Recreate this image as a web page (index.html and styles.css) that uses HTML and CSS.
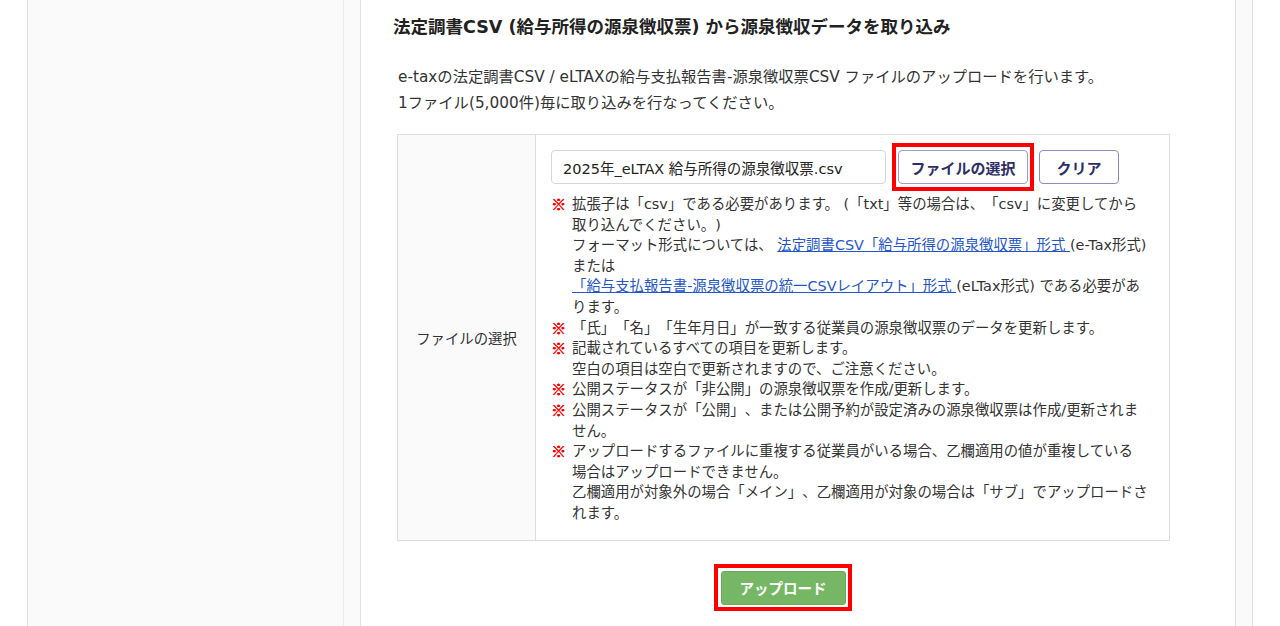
FILE: index.html
```html
<!DOCTYPE html>
<html lang="ja">
<head>
    <meta charset="UTF-8">
    <title>源泉徴収データ取り込み</title>
    <link rel="stylesheet" href="styles.css">
</head>
<body>

<div class="page">
    <div class="side"></div>

    <div class="main">
        <h2 class="title">法定調書CSV (給与所得の源泉徴収票) から源泉徴収データを取り込み</h2>

        <div class="lead">
            <p>e-taxの法定調書CSV / eLTAXの給与支払報告書-源泉徴収票CSV ファイルのアップロードを行います。</p>
            <p>1ファイル(5,000件)毎に取り込みを行なってください。</p>
        </div>

        <table class="form-table">
            <tr>
                <th>ファイルの選択</th>
                <td>
                    <div class="file-row">
                        <input class="file-name" type="text" value="2025年_eLTAX 給与所得の源泉徴収票.csv" readonly>
                        <span class="marked">
                            <button class="btn btn-outline">ファイルの選択</button>
                        </span>
                        <button class="btn btn-outline btn-clear">クリア</button>
                    </div>

                    <!-- line breaks follow the original screen -->
                    <ul class="notes">
                        <li>
                            <span class="mark">※</span>
                            <div>拡張子は「csv」である必要があります。 (「txt」等の場合は、「csv」に変更してから<br>取り込んでください。)<br>フォーマット形式については、 <a href="#">法定調書CSV「給与所得の源泉徴収票」形式 </a>(e-Tax形式)<br>または<br><a href="#">「給与支払報告書-源泉徴収票の統一CSVレイアウト」形式 </a>(eLTax形式) である必要があ<br>ります。</div>
                        </li>
                        <li>
                            <span class="mark">※</span>
                            <div>「氏」「名」「生年月日」が一致する従業員の源泉徴収票のデータを更新します。</div>
                        </li>
                        <li>
                            <span class="mark">※</span>
                            <div>記載されているすべての項目を更新します。<br>空白の項目は空白で更新されますので、ご注意ください。</div>
                        </li>
                        <li>
                            <span class="mark">※</span>
                            <div>公開ステータスが「非公開」の源泉徴収票を作成/更新します。</div>
                        </li>
                        <li>
                            <span class="mark">※</span>
                            <div>公開ステータスが「公開」、または公開予約が設定済みの源泉徴収票は作成/更新されま<br>せん。</div>
                        </li>
                        <li>
                            <span class="mark">※</span>
                            <div>アップロードするファイルに重複する従業員がいる場合、乙欄適用の値が重複している<br>場合はアップロードできません。<br>乙欄適用が対象外の場合「メイン」、乙欄適用が対象の場合は「サブ」でアップロードさ<br>れます。</div>
                        </li>
                    </ul>
                </td>
            </tr>
        </table>

        <div class="actions">
            <span class="marked marked-upload">
                <button class="btn btn-upload">アップロード</button>
            </span>
        </div>
    </div>
</div>

</body>
</html>
```

FILE: styles.css
```css
body {
    margin: 0;
    background: #fff;
    font-family: "DejaVu Sans", "Noto Sans CJK JP", sans-serif;
    font-size: 14.5px;
    color: #333;
    text-spacing-trim: space-all;
}

.page {
    display: flex;
    margin-left: 27px;
    width: 1224px;
    height: 626px;
    overflow: hidden;
    background: #fafafa;
    border-left: 1px solid #e2e2e2;
    border-right: 1px solid #e2e2e2;
}

.side {
    width: 315px;
    border-right: 1px solid #ececec;
}

.main {
    margin-left: 16px;
    width: 876px;
    box-sizing: border-box;
    background: #fff;
    border-left: 1px solid #e2e2e2;
    border-right: 1px solid #e2e2e2;
    padding: 15px 0 0 32px;
}

.title {
    margin: 0;
    font-size: 17.5px;
    line-height: 24px;
    font-weight: bold;
    color: #222;
}

.lead {
    margin: 25px 0 0 5px;
    font-size: 15.3px;
}

.lead p {
    margin: 0;
    line-height: 26px;
}

.form-table {
    margin-top: 18px;
    margin-left: 4px;
    width: 773px;
    border-collapse: collapse;
}

.form-table th,
.form-table td {
    border: 1px solid #dcdcdc;
}

.form-table th {
    width: 137px;
    padding: 0;
    background: #fafafa;
    font-weight: normal;
    font-size: 14.4px;
    color: #333;
    text-align: center;
    vertical-align: middle;
}

.form-table td {
    padding: 15px 15px 16px 15px;
    vertical-align: top;
}

.file-row {
    display: flex;
    align-items: center;
}

.file-name {
    width: 335px;
    height: 34px;
    box-sizing: border-box;
    padding: 0 11px;
    border: 1px solid #d6d6d6;
    border-radius: 4px;
    font-family: inherit;
    font-size: 14.5px;
    color: #222;
}

.btn {
    height: 34px;
    box-sizing: border-box;
    border-radius: 4px;
    font-family: inherit;
    font-size: 15px;
    font-weight: bold;
    cursor: pointer;
}

.btn-outline {
    width: 130px;
    background: #fff;
    border: 1px solid #9c9cc6;
    color: #2e2e66;
}

.btn-clear {
    width: 80px;
    margin-left: 5px;
    border-color: #8d8dbf;
}

/* red frame drawn round the buttons of this step */
.marked {
    display: inline-flex;
    border: 4px solid #f00;
    padding: 3px 2px;
    margin: -7px 0 -7px 6px;
}

.marked-upload {
    margin: 0;
    padding: 3px 2px 2px 3px;
}

.notes {
    list-style: none;
    margin: 10px 0 0;
    padding: 0;
    font-size: 14.4px;
    line-height: 20.6px;
    white-space: nowrap;
}

.notes li {
    display: flex;
}

.notes .mark {
    flex: none;
    width: 21px;
    font-family: "Noto Sans CJK JP", sans-serif;
    font-size: 15px;
    font-weight: bold;
    color: #f00;
    text-shadow: 0.6px 0 0 #f00, 0 0.4px 0 #f00;
}

.notes a {
    color: #2456c8;
    text-decoration: underline;
}

.actions {
    width: 773px;
    margin: 23px 0 0 3px;
    text-align: center;
}

.btn-upload {
    width: 125px;
    background: #76b766;
    border: 1px solid #6aab5a;
    border-radius: 3px;
    color: #fff;
    font-size: 14.5px;
}
```
